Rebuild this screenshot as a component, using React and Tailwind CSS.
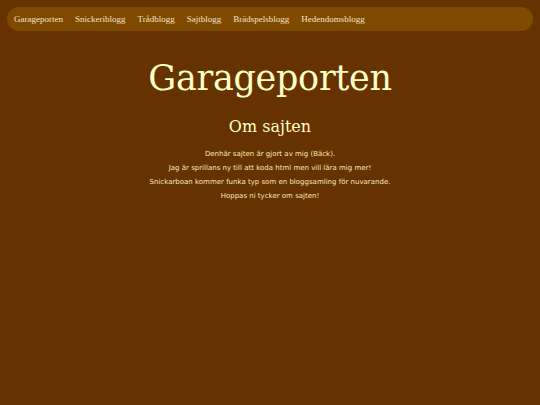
export default function App() {
  const links = ["Garageporten", "Snickeriblogg", "Trådblogg", "Sajtblogg", "Brädspelsblogg", "Hedendomsblogg"];
  return (
    <div className="min-h-[405px] w-full bg-[#663300] pt-[7px] px-[7px]">
      <nav className="flex h-[24px] items-center gap-[12px] rounded-[12px] bg-[#7f4a00] px-[7px] font-['Liberation_Serif',serif] text-[9px] text-[#f3e3c3]">
        {links.map((l) => (
          <a key={l} href="#" className="leading-none">
            {l}
          </a>
        ))}
      </nav>
      <main className="flex flex-col items-center text-[#ffffc8]">
        <h1 className="mt-[23px] font-['DejaVu_Serif',serif] text-[35px] leading-[48px] tracking-[-0.3px]">Garageporten</h1>
        <h2 className="mt-[14px] font-['DejaVu_Serif',serif] text-[16px] leading-[22px]">Om sajten</h2>
        <div className="mt-[9px] text-center font-['DejaVu_Sans',sans-serif] text-[7px] leading-[14px] text-[#f8e6bc]">
          <p>Denhär sajten är gjort av mig (Bäck).</p>
          <p>Jag är sprillans ny till att koda html men vill lära mig mer!</p>
          <p>Snickarboan kommer funka typ som en bloggsamling för nuvarande.</p>
          <p>Hoppas ni tycker om sajten!</p>
        </div>
      </main>
    </div>
  );
}
